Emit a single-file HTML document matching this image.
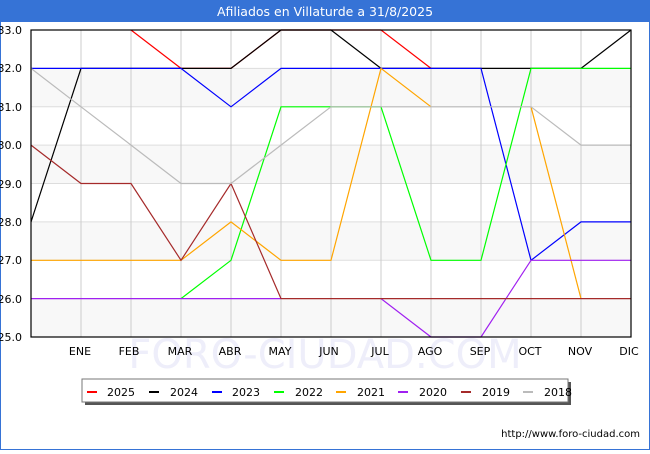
<!DOCTYPE html>
<html><head><meta charset="utf-8"><style>
body{margin:0;width:650px;height:450px;overflow:hidden;background:#fff;font-family:"DejaVu Sans","Liberation Sans",sans-serif}
</style></head><body>
<svg width="650" height="450" viewBox="0 0 650 450" xmlns="http://www.w3.org/2000/svg" font-family="DejaVu Sans, Liberation Sans, sans-serif">
<rect x="0.5" y="0.5" width="649" height="449" fill="#fff" stroke="#3673d6"/>
<rect x="0" y="0" width="650" height="22" fill="#3673d6"/>
<text x="325" y="16" fill="#fff" font-size="12.5" text-anchor="middle">Afiliados en Villaturde a 31/8/2025</text>
<text x="325" y="368" fill="#eeeefa" font-size="40" text-anchor="middle">FORO-CIUDAD.COM</text>
<g fill="#f8f8f8">
<rect x="31" y="68.4" width="600" height="38.4"/>
<rect x="31" y="145.1" width="600" height="38.4"/>
<rect x="31" y="221.9" width="600" height="38.4"/>
<rect x="31" y="298.6" width="600" height="38.4"/>
</g>
<g stroke="#ddd" stroke-width="1">
<path d="M31 68.4H631M31 106.8H631M31 145.1H631M31 183.5H631M31 221.9H631M31 260.3H631M31 298.6H631"/>
</g>
<g stroke="#ccc" stroke-width="1">
<path d="M81 30V337M131 30V337M181 30V337M231 30V337M281 30V337M331 30V337M381 30V337M431 30V337M481 30V337M531 30V337M581 30V337"/>
</g>
<g fill="none" stroke-width="1.2">
<polyline stroke="#ff0000" points="131,30 181,68.4 231,68.4 281,30 331,30 381,30 431,68.4"/>
<polyline stroke="#000" points="31,221.9 81,68.4 131,68.4 181,68.4 231,68.4 281,30 331,30 381,68.4 431,68.4 481,68.4 531,68.4 581,68.4 631,30"/>
<polyline stroke="#0000ff" points="31,68.4 81,68.4 131,68.4 181,68.4 231,106.8 281,68.4 331,68.4 381,68.4 431,68.4 481,68.4 531,260.3 581,221.9 631,221.9"/>
<polyline stroke="#00ff00" points="181,298.6 231,260.3 281,106.8 331,106.8 381,106.8 431,260.3 481,260.3 531,68.4 581,68.4 631,68.4"/>
<polyline stroke="#ffa500" points="31,260.3 81,260.3 131,260.3 181,260.3 231,221.9 281,260.3 331,260.3 381,68.4 431,106.8"/>
<polyline stroke="#ffa500" points="531,106.8 581,298.6"/>
<polyline stroke="#a020f0" points="31,298.6 81,298.6 131,298.6 181,298.6 231,298.6 281,298.6"/>
<polyline stroke="#a020f0" points="381,298.6 431,337 481,337 531,260.3 581,260.3 631,260.3"/>
<polyline stroke="#a52a2a" points="31,145.1 81,183.5 131,183.5 181,260.3 231,183.5 281,298.6 331,298.6 381,298.6 431,298.6 481,298.6 531,298.6 581,298.6 631,298.6"/>
<polyline stroke="#bbb" points="31,68.4 81,106.8 131,145.1 181,183.5 231,183.5 281,145.1 331,106.8 381,106.8 431,106.8 481,106.8 531,106.8 581,145.1 631,145.1"/>
</g>
<rect x="31" y="30" width="600" height="307" fill="none" stroke="#000" stroke-width="1.2"/>
<g font-size="11" fill="#000" text-anchor="end">
<text x="22" y="34">33.0</text><text x="22" y="72">32.0</text><text x="22" y="111">31.0</text><text x="22" y="149">30.0</text><text x="22" y="188">29.0</text><text x="22" y="226">28.0</text><text x="22" y="264">27.0</text><text x="22" y="303">26.0</text><text x="22" y="341">25.0</text>
</g>
<g font-size="11" fill="#000" text-anchor="middle">
<text x="80" y="355">ENE</text><text x="129" y="355">FEB</text><text x="180" y="355">MAR</text><text x="230" y="355">ABR</text><text x="280" y="355">MAY</text><text x="329" y="355">JUN</text><text x="380" y="355">JUL</text><text x="430" y="355">AGO</text><text x="480" y="355">SEP</text><text x="530" y="355">OCT</text><text x="580" y="355">NOV</text><text x="629" y="355">DIC</text>
</g>
<rect x="85" y="382" width="486" height="23" fill="#555"/>
<rect x="82" y="379" width="486" height="23" fill="#fff" stroke="#777"/>
<g stroke-width="2">
<path d="M87 392h10" stroke="#ff0000"/><path d="M149 392h10" stroke="#000"/><path d="M212 392h10" stroke="#0000ff"/><path d="M274 392h10" stroke="#00ff00"/><path d="M336 392h10" stroke="#ffa500"/><path d="M398 392h10" stroke="#a020f0"/><path d="M461 392h10" stroke="#a52a2a"/><path d="M523 392h10" stroke="#bbb"/>
</g>
<g font-size="11" fill="#000">
<text x="107" y="396">2025</text><text x="170" y="396">2024</text><text x="232" y="396">2023</text><text x="295" y="396">2022</text><text x="357" y="396">2021</text><text x="419" y="396">2020</text><text x="482" y="396">2019</text><text x="544" y="396">2018</text>
</g>
<text x="640" y="437" font-size="10" fill="#000" text-anchor="end">http://www.foro-ciudad.com</text>
</svg>
</body></html>
